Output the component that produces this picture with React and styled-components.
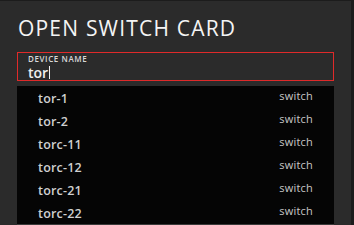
import React from "react";
import styled, { createGlobalStyle } from "styled-components";

const Global = createGlobalStyle`
  html, body { margin: 0; padding: 0; background: #1c1c1c; }
  body { font-family: "Open Sans", "DejaVu Sans", sans-serif; overflow: hidden; }
`;

const Card = styled.div`
  box-sizing: border-box;
  width: 351px;
  height: 224px;
  margin-top: 1px;
  background: #2b2b2b;
  padding: 17px 17px 0 17px;
  display: flex;
  flex-direction: column;
  overflow: hidden;
`;

const Title = styled.h1`
  margin: 0 0 0 1px;
  font-weight: 400;
  font-size: 21px;
  line-height: 20px;
  letter-spacing: 1.2px;
  color: #f4f4f4;
`;

const Field = styled.div`
  margin-top: 14px;
  height: 29px;
  box-sizing: border-box;
  border: 1px solid #e02a2a;
  padding: 2px 10px 0 10px;
  display: flex;
  flex-direction: column;
`;

const Label = styled.span`
  font-size: 8px;
  font-weight: 600;
  line-height: 8px;
  color: #d8d8d8;
  letter-spacing: 0.6px;
`;

const Value = styled.div`
  margin-top: 2px;
  font-size: 14px;
  font-weight: 600;
  line-height: 15px;
  color: #f0f0f0;
  display: flex;
  align-items: center;
`;

const Caret = styled.span`
  display: inline-block;
  width: 1px;
  height: 13px;
  background: #f0f0f0;
  margin-left: 1px;
`;

const List = styled.ul`
  list-style: none;
  margin: 5px 0 0 0;
  padding: 0;
  background: #050505;
  flex: 1;
  border-bottom: 1px solid #3a3a3a;
`;

const Item = styled.li`
  height: 23px;
  display: flex;
  justify-content: space-between;
  align-items: center;
  padding: 0 21px 0 21px;
`;

const Name = styled.span`
  font-size: 12.5px;
  font-weight: 600;
  color: #d0d0d0;
  letter-spacing: 0.2px;
  margin-top: 1px;
`;

const Kind = styled.span`
  font-size: 11px;
  font-weight: 500;
  color: #c8c8c8;
  letter-spacing: 0.2px;
  margin-top: -5px;
`;

const items = ["tor-1", "tor-2", "torc-11", "torc-12", "torc-21", "torc-22"];

export default function App() {
  return (
    <>
      <Global />
      <Card>
        <Title>OPEN SWITCH CARD</Title>
        <Field>
          <Label>DEVICE NAME</Label>
          <Value>tor<Caret /></Value>
        </Field>
        <List>
          {items.map((n) => (
            <Item key={n}>
              <Name>{n}</Name>
              <Kind>switch</Kind>
            </Item>
          ))}
        </List>
      </Card>
    </>
  );
}
